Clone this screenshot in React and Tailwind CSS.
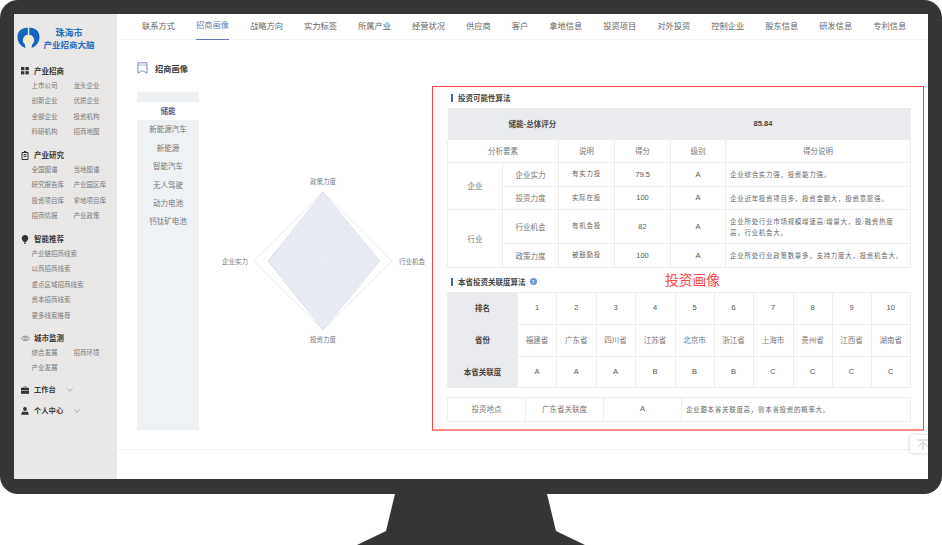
import React from "react";
import { ChevronDown } from "lucide-react";

const FONT = "font-['Noto_Sans_CJK_SC','Liberation_Sans',sans-serif]";
const ROMAN = "font-['Liberation_Sans','Noto_Sans_CJK_SC',sans-serif]";
const SERIF = "font-['Liberation_Serif','Noto_Sans_CJK_SC',serif]";

const tabs = ["联系方式","招商画像","战略方向","实力标签","所属产业","经营状况","供应商","客户","拿地信息","投资项目","对外投资","控制企业","股东信息","研发信息","专利信息"];

const Grid = () => (
  <svg width="8" height="8" viewBox="0 0 8 8" fill="#333"><rect x="0" y="0" width="3.4" height="3.2"/><rect x="4.4" y="0" width="3.4" height="3.2"/><rect x="0" y="4.2" width="3.4" height="3.2"/><rect x="4.4" y="4.2" width="3.4" height="3.2"/></svg>
);
const Doc = () => (
  <svg width="8" height="9" viewBox="0 0 8 9" fill="none" stroke="#333" strokeWidth="1"><path d="M3 .5h2M1 1.5h6v7H1z"/><path d="M2.500 3.600h3M2.500 5.400h3"/></svg>
);
const Bulb = () => (
  <svg width="8" height="9" viewBox="0 0 8 9" fill="#333"><path d="M4 0a3.400 3.400 0 0 0-2 6.100L3 7h2l1-.9A3.400 3.400 0 0 0 4 0z"/><rect x="3" y="7.500" width="2" height="1.200"/></svg>
);
const Eye = () => (
  <svg width="9" height="7" viewBox="0 0 9 7" fill="none" stroke="#666" strokeWidth=".7"><path d="M.3 3.500C2.500.4 6.500.4 8.700 3.500 6.500 6.400 2.500 6.400.3 3.500z"/><circle cx="4.500" cy="3.400" r="1.400"/></svg>
);
const Case = () => (
  <svg width="8" height="8" viewBox="0 0 8 8" fill="#333"><path d="M2.500 1.800V.5h3v1.300h-.7V1.100H3.200v.7z"/><rect x="0" y="1.800" width="8" height="2.500"/><rect x="0" y="4.800" width="8" height="3"/></svg>
);
const User = () => (
  <svg width="8" height="8" viewBox="0 0 8 8" fill="#333"><circle cx="4" cy="2" r="1.900"/><path d="M.2 7.800 1 4.800h6l.8 3z"/></svg>
);
const Logo = () => (
  <svg width="23" height="22" viewBox="0 0 23 22">
    <path d="M10.800.8C5 .3.500 4 .500 10c0 5.500 3.500 9.500 8 11l-.7-3.800A5.400 5.400 0 0 1 10.800 7.700z" fill="#1565c0"/>
    <path d="M12.200.8C18 .3 22.500 4 22.500 10c0 5.500-3.500 9.500-8 11l.7-3.800A5.400 5.400 0 0 0 12.200 7.700z" fill="#1565c0"/>
    <circle cx="11.500" cy="13" r="3.700" fill="#f7eeb9"/>
  </svg>
);

const Section = ({ icon, title, items, two, className = "" }) => (
  <div className={className}>
    <div className="flex h-[12.5px] items-center">
      <span className="flex w-[13px] shrink-0 justify-start">{icon}</span>
      <span className="text-[7.5px] font-bold leading-none text-[#3a3a3a]">{title}</span>
    </div>
    <div className={two ? "grid grid-cols-[42px_42px] pl-[10.500px]" : "grid grid-cols-1 pl-[10.500px]"}>
      {items.map((t) => (
        <span key={t} className="flex h-[15.500px] items-center whitespace-nowrap text-[6.500px] leading-none text-[#777]">{t}</span>
      ))}
    </div>
  </div>
);

const Sidebar = () => (
  <aside className="flex h-full w-[103px] shrink-0 flex-col bg-[#e9e8e6] pt-[13px]">
    <div className="flex h-[22px] items-center pl-[3px]">
      <Logo />
      <div className="ml-[2px] flex w-[54px] flex-col items-center gap-[3px] font-bold leading-none text-[#2a6fc0]">
        <span className="text-[9px] leading-[9px]">珠海市</span>
        <span className="whitespace-nowrap text-[8.500px] leading-[9px]">产业招商大脑</span>
      </div>
    </div>
    <div className="mt-[15.750px] pl-[7px]">
      <Section icon={<Grid />} title="产业招商" two items={["上市公司","龙头企业","创新企业","优质企业","全部企业","投资机构","科研机构","招商地图"]} />
      <Section className="mt-[9.500px]" icon={<Doc />} title="产业研究" two items={["全国图谱","当地图谱","研究报告库","产业园区库","投资项目库","拿地项目库","招商情报","产业政策"]} />
      <Section className="mt-[9.500px]" icon={<Bulb />} title="智能推荐" items={["产业链招商线索","以商招商线索","重点区域招商线索","资本招商线索","更多线索推荐"]} />
      <Section className="mt-[9px]" icon={<Eye />} title="城市监测" two items={["综合发展","招商环境","产业发展"]} />
      <div className="mt-[8.500px] flex h-[12.500px] items-center">
        <span className="w-[13px]"><Case /></span>
        <span className="text-[7.300px] font-bold leading-none text-[#3a3a3a]">工作台</span>
        <ChevronDown className="ml-[9px] h-[10px] w-[10px] text-[#888]" strokeWidth={1.6} />
      </div>
      <div className="mt-[8.500px] flex h-[12.500px] items-center">
        <span className="w-[13px]"><User /></span>
        <span className="text-[7.300px] font-bold leading-none text-[#3a3a3a]">个人中心</span>
        <ChevronDown className="ml-[9px] h-[10px] w-[10px] text-[#888]" strokeWidth={1.6} />
      </div>
    </div>
  </aside>
);

const Nav = () => (
  <nav className="flex h-[26px] shrink-0 gap-[21px] border-b border-[#f6f6f6] pl-[25px]">
    {tabs.map((t, i) => (
      <span key={t} className={"flex h-[26px] items-center whitespace-nowrap pb-[4px] text-[8.250px] leading-none " + (i === 1 ? "border-b border-[#5f77aa] text-[#6a80b0]" : "text-[#666]")}>{t}</span>
    ))}
  </nav>
);

const Radar = () => {
  const cx = 124, cy = 88;
  const ring = (r) => `${cx},${cy - r} ${cx + r},${cy} ${cx},${cy + r} ${cx - r},${cy}`;
  return (
    <svg width="233" height="176" viewBox="0 0 233 176" className="shrink-0">
      <polygon points={`${cx},${cy - 69} ${cx + 57},${cy} ${cx},${cy + 69} ${cx - 55},${cy}`} fill="#e8ebf2" stroke="#d5dbe8" strokeWidth=".6" />
      {[69, 55.2, 41.4, 27.6, 13.8].map((r) => (
        <polygon key={r} points={ring(r)} fill="none" stroke="#dfe3ec" strokeWidth=".7" />
      ))}
      <g fontSize="6.500" fill="#777" textAnchor="middle">
        <text x={cx} y={cy - 77}>政策力度</text>
        <text x={cx + 89} y={cy + 2.500}>行业机会</text>
        <text x={cx} y={cy + 81}>投资力度</text>
        <text x={cx - 88} y={cy + 2.500}>企业实力</text>
      </g>
    </svg>
  );
};

const Side = () => (
  <div className="flex h-[338px] w-[62px] shrink-0 flex-col bg-[#eff2f5] pt-[10px]">
    <div className="flex h-[18px] items-center justify-center bg-white text-[7.500px] font-bold leading-none text-[#4a5f94]">储能</div>
    {["新能源汽车","新能源","智能汽车","无人驾驶","动力电池","钙钛矿电池"].map((t) => (
      <div key={t} className="flex h-[18.400px] items-center justify-center text-[7.500px] leading-none text-[#777]">{t}</div>
    ))}
  </div>
);

const Heading = ({ children, extra }) => (
  <div className="flex h-[10px] items-center">
    <span className="h-[8px] w-[2px] bg-[#51689f]" />
    <span className="ml-[5px] text-[7.500px] font-bold leading-none text-[#444]">{children}</span>
    {extra}
  </div>
);

const cell = "border border-[#eeeeee] text-center align-middle p-0 leading-none";
const cn = cell + " text-[7.500px] text-[#777]";
const num = cell + " " + ROMAN + " text-[7.500px] text-[#555]";
const note = cell + " " + SERIF + " text-[6.500px] tracking-[0.7px] text-[#666]";
const left = "border border-[#eeeeee] align-middle p-0 pl-[4px] text-left " + SERIF + " text-[6.500px] leading-[11px] tracking-[0.7px] text-[#666]";

const ScoreTable = () => (
  <table className="w-[463px] table-fixed border-collapse">
    <colgroup>
      {[55, 56, 56, 56, 55, 185].map((w, i) => <col key={i} style={{ width: w }} />)}
    </colgroup>
    <tbody>
      <tr className="h-[31px] bg-[#e9ebee] text-[7.500px] font-bold text-[#444]">
        <td colSpan={3} className="p-0 pl-[61px] text-left leading-none">储能-总体评分</td>
        <td colSpan={3} className={"p-0 pl-[139px] text-left leading-none " + ROMAN}>85.84</td>
      </tr>
      <tr className="h-[23.500px]">
        <td colSpan={2} className={cn}>分析要素</td><td className={cn}>说明</td><td className={cn}>得分</td><td className={cn}>级别</td><td className={cn}>得分说明</td>
      </tr>
      <tr className="h-[24px]">
        <td rowSpan={2} className={cn}>企业</td><td className={cn}>企业实力</td><td className={note}>有实力投</td><td className={num}>79.5</td><td className={num}>A</td><td className={left}>企业综合实力强，投资能力强。</td>
      </tr>
      <tr className="h-[23px]">
        <td className={cn}>投资力度</td><td className={note}>实际在投</td><td className={num}>100</td><td className={num}>A</td><td className={left}>企业近年投资项目多，投资金额大，投资意愿强。</td>
      </tr>
      <tr className="h-[34px]">
        <td rowSpan={2} className={cn}>行业</td><td className={cn}>行业机会</td><td className={note}>有机会投</td><td className={num}>82</td><td className={num}>A</td><td className={left}>企业所处行业市场规模增速高/增量大，投/融资热度<br />高，行业机会大。</td>
      </tr>
      <tr className="h-[23.500px]">
        <td className={cn}>政策力度</td><td className={note}>被鼓励投</td><td className={num}>100</td><td className={num}>A</td><td className={left}>企业所处行业政策数量多，支持力度大，投资机会大。</td>
      </tr>
    </tbody>
  </table>
);

const ranks = ["1","2","3","4","5","6","7","8","9","10"];
const provs = ["福建省","广东省","四川省","江苏省","北京市","浙江省","上海市","贵州省","江西省","湖南省"];
const lv = ["A","A","A","B","B","B","C","C","C","C"];
const th = "border border-[#eeeeee] bg-[#e9ebee] p-0 text-center align-middle text-[7.500px] font-bold leading-none text-[#444]";

const RankTable = () => (
  <table className="w-[463px] table-fixed border-collapse">
    <colgroup>
      <col style={{ width: 70 }} />
      {[39, 39.5, 39, 40, 39, 39, 40, 39, 39, 39.5].map((w, i) => <col key={i} style={{ width: w }} />)}
    </colgroup>
    <tbody>
      <tr className="h-[32px]"><td className={th}>排名</td>{ranks.map((t) => <td key={t} className={num}>{t}</td>)}</tr>
      <tr className="h-[32px]"><td className={th}>省份</td>{provs.map((t) => <td key={t} className={cn}>{t}</td>)}</tr>
      <tr className="h-[31px]"><td className={th}>本省关联度</td>{lv.map((t, i) => <td key={i} className={num}>{t}</td>)}</tr>
    </tbody>
  </table>
);

const PlaceTable = () => (
  <table className="w-[463px] table-fixed border-collapse">
    <colgroup>
      {[78, 78, 78, 229].map((w, i) => <col key={i} style={{ width: w }} />)}
    </colgroup>
    <tbody>
      <tr className="h-[24px]">
        <td className={cn}>投资地点</td><td className={cn}>广东省关联度</td><td className={num}>A</td><td className={left}>企业跟本省关联度高，则本省投资的概率大。</td>
      </tr>
    </tbody>
  </table>
);

const Report = () => (
  <section className="relative mt-[46px] h-[345px] w-[492px] shrink-0 border border-b-2 border-[#f44] border-b-[#ff8a8a] pl-[14px] pt-[6px]">
    <div className="pl-[4px]"><Heading>投资可能性算法</Heading></div>
    <div className="mt-[5px]"><ScoreTable /></div>
    <div className="mt-[9px] pl-[4px]">
      <Heading extra={<span className="ml-[4px] flex h-[7px] w-[7px] items-center justify-center rounded-full bg-[#6a8fd8] text-[5px] font-bold leading-none text-white">?</span>}>本省投资关联度算法</Heading>
    </div>
    <div className="mt-[5px]"><RankTable /></div>
    <div className="mt-[9px]"><PlaceTable /></div>
    <span className="absolute left-[232px] top-[186px] text-[13.750px] leading-none text-[#f44]">投资画像</span>
  </section>
);

const ToTop = () => (
  <div className="absolute bottom-[26px] right-0 flex h-[18px] w-[18px] items-center justify-start overflow-hidden rounded-l-[2px] bg-white pl-[7px] shadow-[0_0_3px_rgba(0,0,0,0.25)]">
    <svg width="12" height="11" viewBox="0 0 12 11" fill="none" stroke="#bbb" strokeWidth=".8" className="shrink-0"><path d="M0 1h12M6 3v8M6 3 1.500 7.500M6 3l4.500 4.500" /></svg>
  </div>
);

export default function App() {
  return (
    <div className={"h-[545px] w-[942px] overflow-hidden bg-white " + FONT}>
      <div className="h-[494px] rounded-[18px] bg-[#353535] px-[14px] pb-[15px] pt-[14px]">
        <div className="relative flex h-full overflow-hidden bg-white">
          <Sidebar />
          <main className="flex min-w-0 flex-1 flex-col">
            <Nav />
            <div className="flex h-[410px] shrink-0 border-b border-[#f2f2f4]">
              <div className="w-[315px] shrink-0 pl-[20px] pt-[21px]">
                <div className="flex h-[14px] items-center">
                  <svg width="11" height="12" viewBox="0 0 11 12" fill="none" stroke="#7d8fb8" strokeWidth="1"><path d="M1 .8h9v10.400L5.500 8.600 1 11.200z" /><path d="M1 3h9" strokeWidth=".6" /></svg>
                  <span className="ml-[7px] text-[8.250px] font-bold leading-none text-[#444]">招商画像</span>
                </div>
                <div className="mt-[17px] flex items-start">
                  <Side />
                  <div className="mt-[81px]"><Radar /></div>
                </div>
              </div>
              <Report />
            </div>
          </main>
          <ToTop />
        </div>
      </div>
      <svg width="942" height="51" viewBox="0 0 942 51" className="block">
        <path d="M395 0 386 37 357 51H585L556 37 547 0z" fill="#353535" />
      </svg>
    </div>
  );
}
